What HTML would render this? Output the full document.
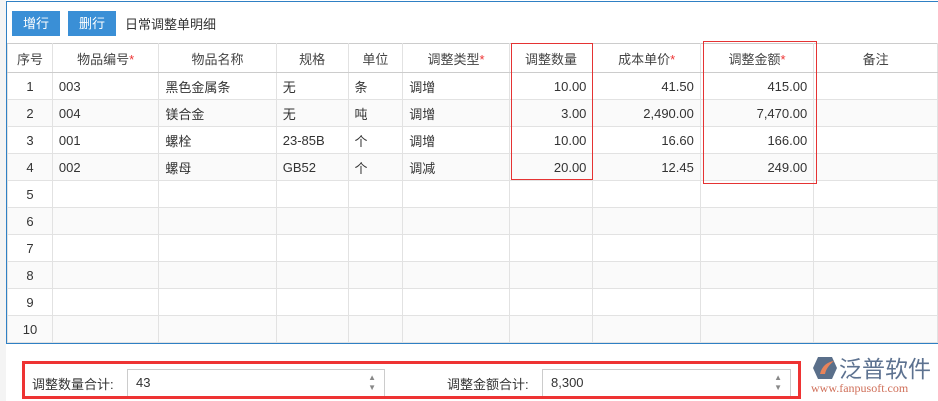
<!DOCTYPE html>
<html><head><meta charset="utf-8"><style>
*{margin:0;padding:0;box-sizing:border-box}
body{width:938px;height:401px;background:#fff;position:relative;overflow:hidden;font-family:"Liberation Sans","Noto Sans CJK SC",sans-serif;font-size:13px;color:#333}
.a{position:absolute;white-space:nowrap}
.btn{position:absolute;top:11px;height:25px;width:48px;background:#3a8fd6;color:#fff;font-size:13px;text-align:center;line-height:25px}
table{position:absolute;left:7px;top:43px;border-collapse:collapse;table-layout:fixed}
td,th{border:1px solid #e2e2e2;height:27px;padding:0 6px;font-weight:normal;white-space:nowrap;overflow:hidden}
th{height:29px;border-top:1px solid #ccc;border-bottom:1px solid #ccc;text-align:center;color:#444}
th i{color:#e33;font-style:normal}
tr.e td{background:#fafafa}
td.c{text-align:center}td.r{text-align:right}
.red{position:absolute;border:1px solid #e53333}
.inp{position:absolute;top:369px;height:28px;border:1px solid #ccc;background:#fff;padding-left:8px;line-height:26px}
.sp{position:absolute;right:8px;top:3px;font-size:8px;color:#888;line-height:10px}
</style></head><body>
<div class="a" style="left:0;top:0;width:6px;height:401px;background:#f4f4f4"></div>
<div class="a" style="left:6px;top:1px;width:940px;height:343px;border:1px solid #2f80c4;border-right:none"></div>
<div class="btn" style="left:12px">增行</div>
<div class="btn" style="left:68px">删行</div>
<div class="a" style="left:125px;top:14px">日常调整单明细</div>
<table>
<colgroup><col style="width:45px"><col style="width:107px"><col style="width:118px"><col style="width:72px"><col style="width:55px"><col style="width:107px"><col style="width:84px"><col style="width:108px"><col style="width:114px"><col style="width:125px"></colgroup>
<tr><th>序号</th><th>物品编号<i>*</i></th><th>物品名称</th><th>规格</th><th>单位</th><th>调整类型<i>*</i></th><th>调整数量</th><th>成本单价<i>*</i></th><th>调整金额<i>*</i></th><th>备注</th></tr>
<tr><td class="c">1</td><td>003</td><td>黑色金属条</td><td>无</td><td>条</td><td>调增</td><td class="r">10.00</td><td class="r">41.50</td><td class="r">415.00</td><td></td></tr>
<tr class="e"><td class="c">2</td><td>004</td><td>镁合金</td><td>无</td><td>吨</td><td>调增</td><td class="r">3.00</td><td class="r">2,490.00</td><td class="r">7,470.00</td><td></td></tr>
<tr><td class="c">3</td><td>001</td><td>螺栓</td><td>23-85B</td><td>个</td><td>调增</td><td class="r">10.00</td><td class="r">16.60</td><td class="r">166.00</td><td></td></tr>
<tr class="e"><td class="c">4</td><td>002</td><td>螺母</td><td>GB52</td><td>个</td><td>调减</td><td class="r">20.00</td><td class="r">12.45</td><td class="r">249.00</td><td></td></tr>
<tr><td class="c">5</td><td></td><td></td><td></td><td></td><td></td><td></td><td></td><td></td><td></td></tr>
<tr class="e"><td class="c">6</td><td></td><td></td><td></td><td></td><td></td><td></td><td></td><td></td><td></td></tr>
<tr><td class="c">7</td><td></td><td></td><td></td><td></td><td></td><td></td><td></td><td></td><td></td></tr>
<tr class="e"><td class="c">8</td><td></td><td></td><td></td><td></td><td></td><td></td><td></td><td></td><td></td></tr>
<tr><td class="c">9</td><td></td><td></td><td></td><td></td><td></td><td></td><td></td><td></td><td></td></tr>
<tr class="e"><td class="c">10</td><td></td><td></td><td></td><td></td><td></td><td></td><td></td><td></td><td></td></tr>
</table>
<div class="red" style="left:511px;top:43px;width:82px;height:137px"></div>
<div class="red" style="left:703px;top:41px;width:114px;height:143px"></div>
<div class="a" style="left:32px;top:374px">调整数量合计:</div>
<div class="inp" style="left:127px;width:258px">43<div class="sp">▲<br>▼</div></div>
<div class="a" style="left:447px;top:374px">调整金额合计:</div>
<div class="inp" style="left:542px;width:249px">8,300<div class="sp">▲<br>▼</div></div>
<div class="a" style="left:22px;top:361px;width:779px;height:38px;border:3px solid #ee3333"></div>
<svg class="a" style="left:812px;top:356px" width="26" height="24" viewBox="0 0 26 24"><path d="M6 1H20L25 12L20 23H6L1 12Z" fill="#5a6f8a"/><path d="M8 18C10 10 15 6 22 5C17 9 14 13 13 18Z" fill="#e8835a"/></svg>
<div class="a" style="left:839px;top:353px;font-size:23px;color:#5d7290;font-family:'Noto Sans CJK SC',sans-serif;line-height:28px">泛普软件</div>
<div class="a" style="left:811px;top:381px;font-size:12px;color:#d0705a;font-family:'Liberation Serif',serif">www.fanpusoft.com</div>
</body></html>
